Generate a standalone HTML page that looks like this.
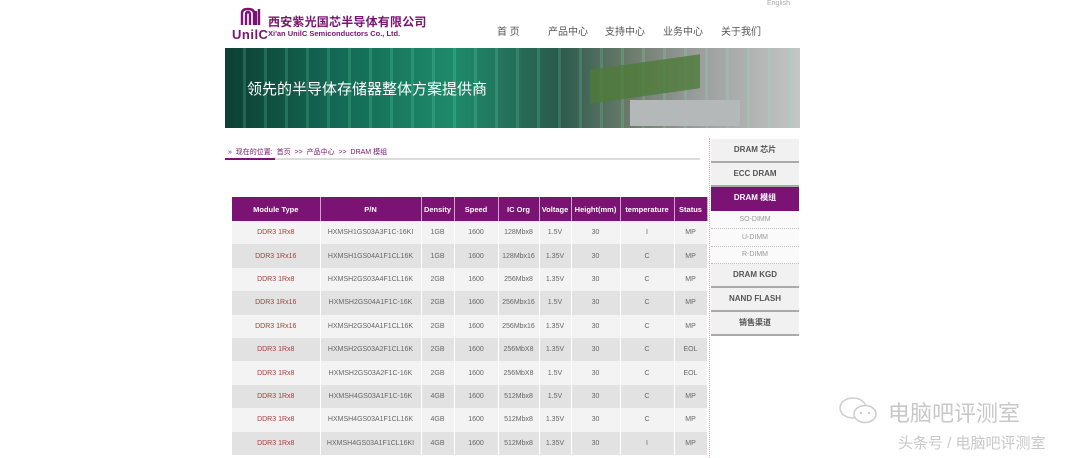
<!DOCTYPE html>
<html><head><meta charset="utf-8"><style>
*{margin:0;padding:0;box-sizing:border-box}
body{width:1080px;height:458px;background:#fff;position:relative;overflow:hidden;font-family:"Liberation Sans","Noto Sans CJK SC",sans-serif;}
.abs{position:absolute}
.nav span{position:absolute;top:23px;font-size:10px;color:#555}
table{border-collapse:collapse;position:absolute;left:232px;top:197px;width:475px;table-layout:fixed}
th{background:#7a1373;color:#fff;font-size:7.5px;font-weight:bold;height:24px;border-right:1px solid #c9a8c6;text-align:center}
td{font-size:7px;color:#666;height:23.4px;text-align:center;border-right:1px solid #fff}
tr:nth-child(even) td{background:#f3f3f3}
tr:nth-child(odd) td{background:#e2e2e2}
td.t{color:#a0403c}
.side div{position:absolute;left:711px;width:88px;text-align:center;font-size:8px;font-weight:bold;color:#555;background:#f1f1f1;border-bottom:2px solid #aaa}
.side div.s{font-weight:normal;font-size:7px;color:#999;background:#fafafa;border-bottom:1px dotted #bbb}
</style></head><body>
<div class="abs" style="left:767px;top:0;font-size:7px;color:#aaa">English</div>
<svg class="abs" style="left:238px;top:7px" width="26" height="20" viewBox="0 0 26 20"><path d="M4 18V6Q4 2 10 2Q16 2 16 6V18M8 18V8Q8 5 10 5Q12 5 12 8V18M18 4V18M21 2V18" stroke="#7a1373" stroke-width="2.4" fill="none"/></svg>
<div class="abs" style="left:232px;top:27px;font-size:13px;font-weight:bold;color:#7a1373;letter-spacing:0.5px">UnilC</div>
<div class="abs" style="left:268px;top:13px;font-size:12px;font-weight:bold;color:#7a1373;letter-spacing:0.2px">西安紫光国芯半导体有限公司</div>
<div class="abs" style="left:268px;top:29px;font-size:7.5px;font-weight:bold;color:#7a1373">Xi'an UnilC Semiconductors Co., Ltd.</div>
<div class="nav"><span style="left:497px">首 页</span><span style="left:548px">产品中心</span><span style="left:605px">支持中心</span><span style="left:663px">业务中心</span><span style="left:721px">关于我们</span></div>
<div class="abs" style="left:225px;top:48px;width:575px;height:80px;background:linear-gradient(90deg,#0d3f34 0%,#146a55 20%,#1e8a6a 40%,#2a5a4c 58%,#6a7a6a 70%,#9a9d9c 82%,#c4c6c6 100%)"></div>
<div class="abs" style="left:225px;top:48px;width:575px;height:80px;background:repeating-linear-gradient(90deg,transparent 0 18px,rgba(120,240,190,.18) 18px 21px);"></div>
<div class="abs" style="left:590px;top:62px;width:110px;height:34px;background:#4f7a3a;opacity:.8;transform:skewY(-8deg)"></div>
<div class="abs" style="left:630px;top:100px;width:110px;height:26px;background:#b5b8b8"></div>
<div class="abs" style="left:247px;top:78px;font-size:15px;color:#fff">领先的半导体存储器整体方案提供商</div>
<div class="abs" style="left:228px;top:147px;font-size:7px;color:#7a1373">» &nbsp;现在的位置: &nbsp;首页 &nbsp;&gt;&gt; &nbsp;产品中心 &nbsp;&gt;&gt; &nbsp;DRAM 模组</div>
<div class="abs" style="left:225px;top:158px;width:475px;height:2px;background:#ddd"></div>
<div class="abs" style="left:225px;top:158px;width:50px;height:2px;background:#7a1373"></div>
<table>
<colgroup><col style="width:88px"><col style="width:101px"><col style="width:33px"><col style="width:44px"><col style="width:41px"><col style="width:32px"><col style="width:49px"><col style="width:54px"><col style="width:33px"></colgroup>
<tr><th>Module Type</th><th>P/N</th><th>Density</th><th>Speed</th><th>IC Org</th><th>Voltage</th><th>Height(mm)</th><th>temperature</th><th>Status</th></tr>
<tr><td class="t">DDR3 1Rx8</td><td>HXMSH1GS03A3F1C-16KI</td><td>1GB</td><td>1600</td><td>128Mbx8</td><td>1.5V</td><td>30</td><td>I</td><td>MP</td></tr>
<tr><td class="t">DDR3 1Rx16</td><td>HXMSH1GS04A1F1CL16K</td><td>1GB</td><td>1600</td><td>128Mbx16</td><td>1.35V</td><td>30</td><td>C</td><td>MP</td></tr>
<tr><td class="t">DDR3 1Rx8</td><td>HXMSH2GS03A4F1CL16K</td><td>2GB</td><td>1600</td><td>256Mbx8</td><td>1.35V</td><td>30</td><td>C</td><td>MP</td></tr>
<tr><td class="t">DDR3 1Rx16</td><td>HXMSH2GS04A1F1C-16K</td><td>2GB</td><td>1600</td><td>256Mbx16</td><td>1.5V</td><td>30</td><td>C</td><td>MP</td></tr>
<tr><td class="t">DDR3 1Rx16</td><td>HXMSH2GS04A1F1CL16K</td><td>2GB</td><td>1600</td><td>256Mbx16</td><td>1.35V</td><td>30</td><td>C</td><td>MP</td></tr>
<tr><td class="t">DDR3 1Rx8</td><td>HXMSH2GS03A2F1CL16K</td><td>2GB</td><td>1600</td><td>256MbX8</td><td>1.35V</td><td>30</td><td>C</td><td>EOL</td></tr>
<tr><td class="t">DDR3 1Rx8</td><td>HXMSH2GS03A2F1C-16K</td><td>2GB</td><td>1600</td><td>256MbX8</td><td>1.5V</td><td>30</td><td>C</td><td>EOL</td></tr>
<tr><td class="t">DDR3 1Rx8</td><td>HXMSH4GS03A1F1C-16K</td><td>4GB</td><td>1600</td><td>512Mbx8</td><td>1.5V</td><td>30</td><td>C</td><td>MP</td></tr>
<tr><td class="t">DDR3 1Rx8</td><td>HXMSH4GS03A1F1CL16K</td><td>4GB</td><td>1600</td><td>512Mbx8</td><td>1.35V</td><td>30</td><td>C</td><td>MP</td></tr>
<tr><td class="t">DDR3 1Rx8</td><td>HXMSH4GS03A1F1CL16KI</td><td>4GB</td><td>1600</td><td>512Mbx8</td><td>1.35V</td><td>30</td><td>I</td><td>MP</td></tr>
</table>
<div class="abs" style="left:709px;top:138px;height:320px;border-left:1px dotted #c9a8c6"></div>
<div class="side">
<div style="top:139px;height:24px;line-height:22px">DRAM 芯片</div>
<div style="top:163px;height:24px;line-height:22px">ECC DRAM</div>
<div style="top:187px;height:24px;line-height:22px;background:#7a1373;color:#fff;border-bottom:0">DRAM 模组</div>
<div class="s" style="top:211px;height:18px;line-height:17px">SO-DIMM</div>
<div class="s" style="top:229px;height:18px;line-height:17px">U-DIMM</div>
<div class="s" style="top:247px;height:17px;line-height:16px">R-DIMM</div>
<div style="top:264px;height:24px;line-height:22px">DRAM KGD</div>
<div style="top:288px;height:24px;line-height:22px">NAND FLASH</div>
<div style="top:312px;height:24px;line-height:22px">销售渠道</div>
</div>
<svg class="abs" style="left:838px;top:396px" width="44" height="30" viewBox="0 0 44 30"><ellipse cx="15" cy="12" rx="13" ry="10" fill="none" stroke="#ccc" stroke-width="1.5"/><ellipse cx="27" cy="18" rx="11" ry="8.5" fill="#fff" stroke="#ccc" stroke-width="1.5"/><circle cx="23" cy="17" r="1.2" fill="#ccc"/><circle cx="31" cy="17" r="1.2" fill="#ccc"/></svg>
<div class="abs" style="left:888px;top:396px;font-size:22px;color:#c8c8c8">电脑吧评测室</div>
<div class="abs" style="left:898px;top:432px;font-size:15px;color:#c8c8c8">头条号 / 电脑吧评测室</div>
</body></html>
